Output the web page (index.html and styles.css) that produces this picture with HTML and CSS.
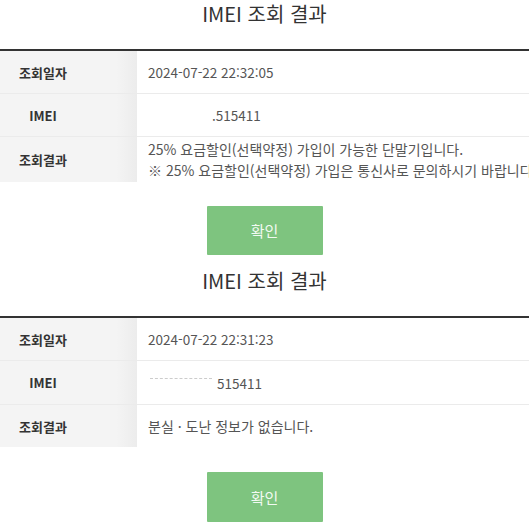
FILE: index.html
```html
<!DOCTYPE html>
<html lang="ko">
<head>
    <meta charset="UTF-8">
    <meta name="viewport" content="width=device-width, initial-scale=1.0">
    <title>IMEI 조회 결과</title>
    <link rel="stylesheet" href="styles.css">
</head>
<body>
    <div class="result-box">
        <h2 class="result-title">IMEI 조회 결과</h2>
        <div class="result-table">
            <div class="row">
                <div class="label"><span>조회일자</span></div>
                <div class="value">2024-07-22 22:32:05</div>
            </div>
            <div class="row">
                <div class="label"><span>IMEI</span></div>
                <div class="value"><span class="masked"></span>.515411</div>
            </div>
            <div class="row row-tall">
                <div class="label"><span>조회결과</span></div>
                <div class="value lines">
                    <div>25% 요금할인(선택약정) 가입이 가능한 단말기입니다.</div>
                    <div>※ 25% 요금할인(선택약정) 가입은 통신사로 문의하시기 바랍니다.</div>
                </div>
            </div>
        </div>
        <button class="ok-btn">확인</button>
    </div>

    <div class="result-box second">
        <h2 class="result-title">IMEI 조회 결과</h2>
        <div class="result-table">
            <div class="row">
                <div class="label"><span>조회일자</span></div>
                <div class="value">2024-07-22 22:31:23</div>
            </div>
            <div class="row row-mid">
                <div class="label"><span>IMEI</span></div>
                <div class="value"><span class="masked dashed"></span>515411</div>
            </div>
            <div class="row">
                <div class="label"><span>조회결과</span></div>
                <div class="value wide">분실 · 도난 정보가 없습니다.</div>
            </div>
        </div>
        <button class="ok-btn">확인</button>
    </div>
</body>
</html>
```

FILE: styles.css
```css
body {
    margin: 0;
    background: #ffffff;
    font-family: "Noto Sans CJK KR", "Noto Sans", sans-serif;
    color: #444;
    overflow: hidden;
}

.result-box {
    display: flex;
    flex-direction: column;
    align-items: center;
}

.result-box.second {
    margin-top: 12px;
}

.result-title {
    margin: 0;
    line-height: 28px;
    font-size: 20px;
    font-weight: 400;
    color: #333;
}

.result-title + .result-table {
    margin-top: 21px;
}

.result-table {
    width: 100%;
    border-top: 2px solid #333;
}

.row {
    display: flex;
    height: 42px;
    border-bottom: 1px solid #ebebeb;
}

.row:last-child {
    border-bottom: none;
}

.row-tall {
    height: 45px;
}

.row-mid {
    height: 43px;
}

.label {
    width: 137px;
    flex-shrink: 0;
    display: flex;
    align-items: center;
    background: linear-gradient(90deg, #f4f4f4 85%, #ececec);
    font-size: 13px;
    font-weight: 700;
    color: #333;
}

.label span {
    width: 86px;
    text-align: center;
}

.value {
    flex: 1;
    display: flex;
    align-items: center;
    padding-left: 11px;
    font-size: 13.5px;
    color: #555;
    white-space: nowrap;
    overflow: hidden;
}

.value.lines,
.value.wide {
    font-size: 14px;
}

.value.lines {
    flex-direction: column;
    align-items: flex-start;
    justify-content: center;
    line-height: 21px;
}

.masked {
    display: inline-block;
    width: 64px;
}

.masked.dashed {
    width: 62px;
    height: 8px;
    margin-left: 2px;
    margin-right: 5px;
    border-top: 1px dashed #ccc;
    align-self: center;
}

.ok-btn {
    margin-top: 24px;
    width: 116px;
    height: 49px;
    border: none;
    border-radius: 1px;
    background: #7ec47f;
    color: #f2faf2;
    font-family: "Noto Sans CJK KR", sans-serif;
    font-size: 15px;
    cursor: pointer;
}

.second .ok-btn {
    margin-top: 25px;
    height: 50px;
}
```
